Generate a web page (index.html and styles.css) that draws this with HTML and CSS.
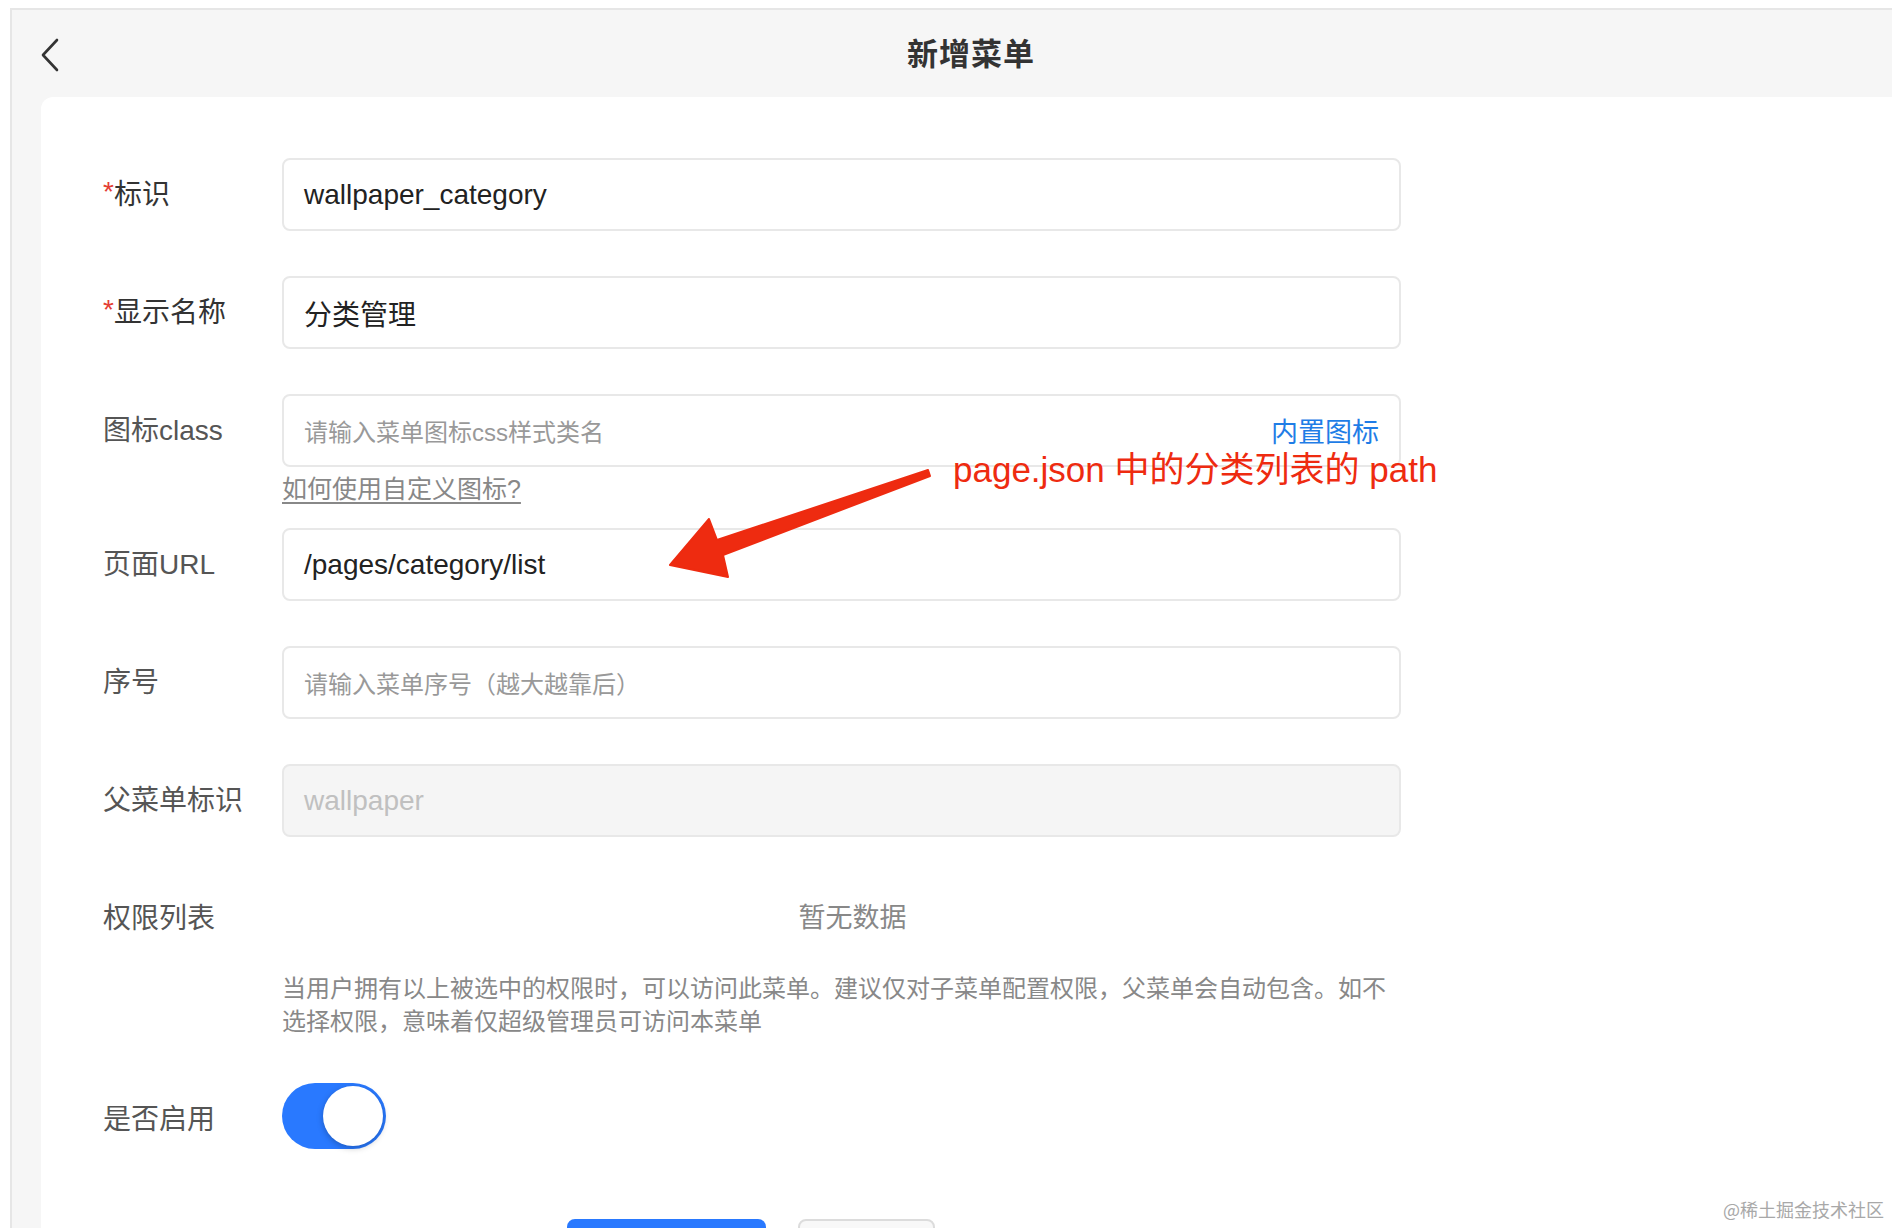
FILE: index.html
```html
<!doctype html>
<html lang="zh-CN">

<head>
  <meta charset="UTF-8" />
  <meta name="viewport" content="width=device-width, initial-scale=1.0" />
  <title>新增菜单</title>

  <link rel="stylesheet" href="styles.css">
</head>

<body>
  <div class="frame">
    <div class="navbar">
      <span class="nav-back">
        <svg width="20" height="34" viewBox="0 0 20 34">
          <path d="M17 2 L3 17 L17 32" fill="none" stroke="#333" stroke-width="2.6" stroke-linecap="round" stroke-linejoin="round" />
        </svg>
      </span>
      <span class="nav-title">新增菜单</span>
      <span class="nav-side"></span>
    </div>

    <div class="card">
      <div class="form-item">
        <label class="form-label required"><i>*</i>标识</label>
        <div class="form-control">
          <div class="input"><span class="value">wallpaper_category</span></div>
        </div>
      </div>

      <div class="form-item">
        <label class="form-label required"><i>*</i>显示名称</label>
        <div class="form-control">
          <div class="input"><span class="value">分类管理</span></div>
        </div>
      </div>

      <div class="form-item with-tip">
        <label class="form-label">图标class</label>
        <div class="form-control">
          <div class="input">
            <span class="placeholder">请输入菜单图标css样式类名</span>
            <span class="input-link">内置图标</span>
          </div>
          <a class="tip-link">如何使用自定义图标?</a>
        </div>
      </div>

      <div class="form-item">
        <label class="form-label">页面URL</label>
        <div class="form-control">
          <div class="input"><span class="value">/pages/category/list</span></div>
        </div>
      </div>

      <div class="form-item">
        <label class="form-label">序号</label>
        <div class="form-control">
          <div class="input"><span class="placeholder">请输入菜单序号（越大越靠后）</span></div>
        </div>
      </div>

      <div class="form-item">
        <label class="form-label">父菜单标识</label>
        <div class="form-control">
          <div class="input disabled"><span class="value">wallpaper</span></div>
        </div>
      </div>

      <div class="form-item perm">
        <label class="form-label">权限列表</label>
        <div class="form-control">
          <div class="empty">暂无数据</div>
          <p class="help">当用户拥有以上被选中的权限时，可以访问此菜单。建议仅对子菜单配置权限，父菜单会自动包含。如不选择权限，意味着仅超级管理员可访问本菜单</p>
        </div>
      </div>

      <div class="form-item switch-item">
        <label class="form-label">是否启用</label>
        <div class="form-control">
          <div class="switch on"><span class="switch-thumb"></span></div>
        </div>
      </div>

      <div class="btn-group">
        <button class="btn btn-primary" aria-label="提交"></button>
        <button class="btn btn-default" aria-label="返回"></button>
      </div>
    </div>
  </div>

  <!-- 标注 -->
  <svg class="mark-arrow" width="1892" height="1228" viewBox="0 0 1892 1228">
    <polygon points="928,470 717,540 709,519 670,565 728,577 723,555 930,476" fill="#ee2b10" stroke="#ee2b10" stroke-width="2" stroke-linejoin="round" />
  </svg>
  <div class="mark-text">page.json 中的分类列表的 path</div>

  <div class="watermark">@稀土掘金技术社区</div>
</body>

</html>
```

FILE: styles.css
```css
* {
  box-sizing: border-box;
}

html,
body {
  margin: 0;
  height: 100%;
  overflow: hidden;
}

body {
  background-color: #fff;
  font-family: "Liberation Sans", "Noto Sans CJK SC", sans-serif;
  color: #333;
}

.frame {
  margin: 8px 0 0 10px;
  height: calc(100% - 8px);
  border-top: 2px solid #e6e6e6;
  border-left: 2px solid #e6e6e6;
  background-color: #f6f6f6;
}

.navbar {
  height: 87px;
  display: flex;
  align-items: center;
  padding: 0 28px;
}

.nav-back {
  width: 38px;
  display: flex;
  align-items: center;
  margin-top: 2px;
}

.nav-title {
  flex: 1;
  text-align: center;
  font-size: 31px;
  font-weight: 700;
  color: #333;
  letter-spacing: 1px;
  margin-bottom: 4px;
}

.nav-side {
  width: 0;
}

.card {
  margin-left: 29px;
  height: calc(100% - 87px);
  background-color: #fff;
  border-top-left-radius: 12px;
  padding: 61px 0 0 62px;
}

.form-item {
  display: flex;
  align-items: flex-start;
  margin-bottom: 45px;
}

.form-item.with-tip {
  margin-bottom: 23px;
}

.form-label {
  width: 179px;
  flex-shrink: 0;
  height: 73px;
  line-height: 73px;
  font-size: 28px;
  color: #555;
}

.form-label.required {
  color: #333;
}

.form-label i {
  font-style: normal;
  color: #e43d33;
  font-size: 28px;
  vertical-align: top;
  position: relative;
  top: -3px;
}

.form-control {
  width: 1119px;
}

.input {
  height: 73px;
  display: flex;
  align-items: center;
  padding: 0 20px 0 20px;
  border: 2px solid #e8e8e8;
  border-radius: 8px;
  background-color: #fff;
}

.input .value {
  flex: 1;
  font-size: 28px;
  color: #222;
}

.input .placeholder {
  flex: 1;
  font-size: 24px;
  color: #999;
}

.input.disabled {
  background-color: #f5f5f5;
}

.input.disabled .value {
  color: #c0c0c0;
}

.input-link {
  font-size: 27px;
  color: #1f7de6;
}

.tip-link {
  display: block;
  margin-top: 6px;
  line-height: 32px;
  font-size: 25px;
  color: #888;
  text-decoration: underline;
  text-underline-offset: 4px;
}

.empty {
  height: 73px;
  line-height: 73px;
  text-align: center;
  font-size: 27px;
  color: #888;
  padding-left: 22px;
}

.help {
  margin: 17px 0 0 0;
  width: 1110px;
  font-size: 24px;
  line-height: 33px;
  color: #888;
}

.switch-item .form-label {
  height: 66px;
  line-height: 74px;
}

.switch {
  width: 104px;
  height: 66px;
  border-radius: 33px;
  background-color: #2979ff;
  display: flex;
  align-items: center;
  justify-content: flex-end;
  padding: 0 3px;
}

.switch-thumb {
  width: 60px;
  height: 60px;
  border-radius: 50%;
  background-color: #fff;
  box-shadow: 0 2px 6px rgba(0, 0, 0, 0.25);
}

.btn-group {
  display: flex;
  gap: 32px;
  margin: 70px 0 0 464px;
}

.btn {
  height: 60px;
  border-radius: 8px;
  font-size: 26px;
  font-family: inherit;
  padding: 0;
}

.btn-primary {
  width: 199px;
  border: none;
  background-color: #2979ff;
  color: #fff;
}

.btn-default {
  width: 137px;
  border: 2px solid #dcdcdc;
  background-color: #f8f8f8;
  color: #333;
}

.mark-arrow {
  position: absolute;
  left: 0;
  top: 0;
  pointer-events: none;
}

.mark-text {
  position: absolute;
  left: 953px;
  top: 447px;
  font-size: 35px;
  line-height: 46px;
  color: #ee2b10;
  white-space: nowrap;
}

.watermark {
  position: absolute;
  right: 8px;
  bottom: 6px;
  font-size: 18px;
  color: #a8a8a8;
  font-family: "Noto Sans CJK SC", serif;
}
```
